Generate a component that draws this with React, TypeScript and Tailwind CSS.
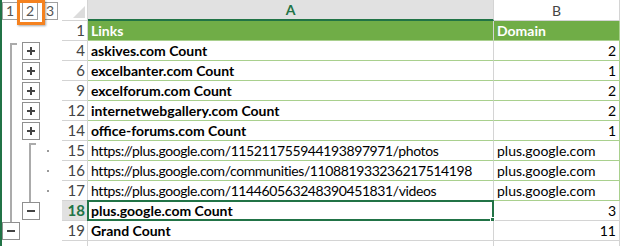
import React from "react";

type Row = {
  n: string;
  a: string;
  b: string;
  kind: "head" | "count" | "link" | "sub" | "total";
};

const rows: Row[] = [
  { n: "1", a: "Links", b: "Domain", kind: "head" },
  { n: "4", a: "askives.com Count", b: "2", kind: "count" },
  { n: "6", a: "excelbanter.com Count", b: "1", kind: "count" },
  { n: "9", a: "excelforum.com Count", b: "2", kind: "count" },
  { n: "12", a: "internetwebgallery.com Count", b: "2", kind: "count" },
  { n: "14", a: "office-forums.com Count", b: "1", kind: "count" },
  { n: "15", a: "https://plus.google.com/115211755944193897971/photos", b: "plus.google.com", kind: "link" },
  { n: "16", a: "https://plus.google.com/communities/110881933236217514198", b: "plus.google.com", kind: "link" },
  { n: "17", a: "https://plus.google.com/114460563248390451831/videos", b: "plus.google.com", kind: "link" },
  { n: "18", a: "plus.google.com Count", b: "3", kind: "sub" },
  { n: "19", a: "Grand Count", b: "11", kind: "total" },
];

function OutlineGutter() {
  const box = (x: number, i: number, plus: boolean) => (
    <g key={`${x}-${i}`}>
      <rect x={x + 0.5} y={20 * i + 1.5} width={17} height={17} fill="#fff" stroke="#8f8f8f" />
      <line x1={x + 5} x2={x + 13} y1={20 * i + 10} y2={20 * i + 10} stroke="#444" strokeWidth={2} />
      {plus && <line x1={x + 9} x2={x + 9} y1={20 * i + 6} y2={20 * i + 14} stroke="#444" strokeWidth={2} />}
    </g>
  );
  return (
    <svg width="62" height="225" className="block">
      {/* level 1 bracket */}
      <line x1={11} x2={11} y1={22} y2={201} stroke="#ababab" strokeWidth={2} />
      <line x1={10} x2={17} y1={23} y2={23} stroke="#ababab" strokeWidth={2} />
      {/* level 2 bracket */}
      <line x1={30} x2={30} y1={122} y2={181} stroke="#ababab" strokeWidth={2} />
      <line x1={29} x2={36} y1={123} y2={123} stroke="#ababab" strokeWidth={2} />
      {[6, 7, 8].map((i) => (
        <rect key={i} x={47} y={20 * i + 9} width={2} height={2} fill="#9a9a9a" />
      ))}
      {[1, 2, 3, 4, 5].map((i) => box(22, i, true))}
      {box(22, 9, false)}
      {box(2, 10, false)}
    </svg>
  );
}

export default function App() {
  return (
    <div className="w-[624px] h-[246px] overflow-hidden bg-white flex font-['Lato',sans-serif] border-l-2 border-[#217346]">
      {/* Outline column */}
      <div className="w-[60px] shrink-0 flex flex-col">
        <div className="relative h-[21px] flex items-start gap-[4px] pt-[2px]">
          {["1", "2", "3"].map((l) => (
            <div
              key={l}
              className="w-[16px] h-[18px] border border-[#a0a0a0] flex items-center justify-center text-[14px] text-[#555] leading-none"
            >
              {l}
            </div>
          ))}
          <div className="absolute left-[15px] top-0 w-[28px] h-[25px] border-[3px] border-[#f5821f] shadow-[1px_1px_2px_rgba(0,0,0,0.35)]" />
        </div>
        <div className="-ml-[2px]">
          <OutlineGutter />
        </div>
      </div>

      {/* Sheet */}
      <div className="flex flex-col">
        {/* Column headers */}
        <div className="flex h-[21px] shrink-0">
          <div className="w-[26px] border-r border-b border-[#d4d4d4] relative">
            <svg width="26" height="21" className="absolute inset-0">
              <polygon points="11,18 23,18 23,6" fill="#dcdcdc" />
            </svg>
          </div>
          <div className="w-[406px] bg-[#e1e1e1] border-r border-[#d4d4d4] border-b-2 border-b-[#217346] flex items-center justify-center text-[14px] font-bold text-[#217346]">
            A
          </div>
          <div className="w-[126px] border-r border-b border-[#d4d4d4] flex items-center justify-center text-[14px] text-[#444]">
            B
          </div>
        </div>

        {rows.map((r) => {
          const inTable = r.kind !== "sub" && r.kind !== "total";
          const line = inTable ? "border-[#a9d08e]" : "border-[#d4d4d4]";
          const bold = r.kind !== "link";
          const head = r.kind === "head";
          const sel = r.kind === "sub";
          return (
            <div key={r.n} className="flex h-[20px] shrink-0 text-[14px] leading-none">
              <div
                className={`w-[26px] border-r border-b border-[#d4d4d4] flex items-center justify-end pr-[2px] text-[15px] ${
                  sel ? "bg-[#e1e1e1] text-[#217346] font-bold" : "text-[#444]"
                }`}
              >
                {r.n}
              </div>
              <div
                className={`relative w-[406px] border-b ${line} border-r border-r-[#d4d4d4] flex items-center pl-[3px] whitespace-nowrap ${
                  head ? "bg-[#70ad47] text-white border-r-[#70ad47]" : "text-black"
                } ${bold ? "font-bold" : "tracking-[-0.4px]"}`}
              >
                {r.a}
                {sel && (
                  <div className="absolute -top-[1px] -left-[1px] -right-[1px] -bottom-[1px] border-2 border-[#217346]">
                    <div className="absolute -right-[3px] -bottom-[3px] w-[5px] h-[5px] bg-[#217346] border border-white" />
                  </div>
                )}
              </div>
              <div
                className={`w-[126px] border-b ${line} border-r ${
                  inTable ? "border-r-[#a9d08e]" : "border-r-[#d4d4d4]"
                } flex items-center px-[3px] whitespace-nowrap ${
                  head ? "bg-[#70ad47] text-white font-bold justify-start border-r-[#70ad47]" : "text-black"
                } ${r.kind === "link" ? "justify-start" : "justify-end"}`}
              >
                {r.b}
              </div>
            </div>
          );
        })}
        <div className="flex h-[20px] shrink-0">
          <div className="w-[26px] border-r border-[#d4d4d4]" />
          <div className="w-[406px] border-r border-[#d4d4d4]" />
          <div className="w-[126px] border-r border-[#d4d4d4]" />
        </div>
      </div>
    </div>
  );
}
